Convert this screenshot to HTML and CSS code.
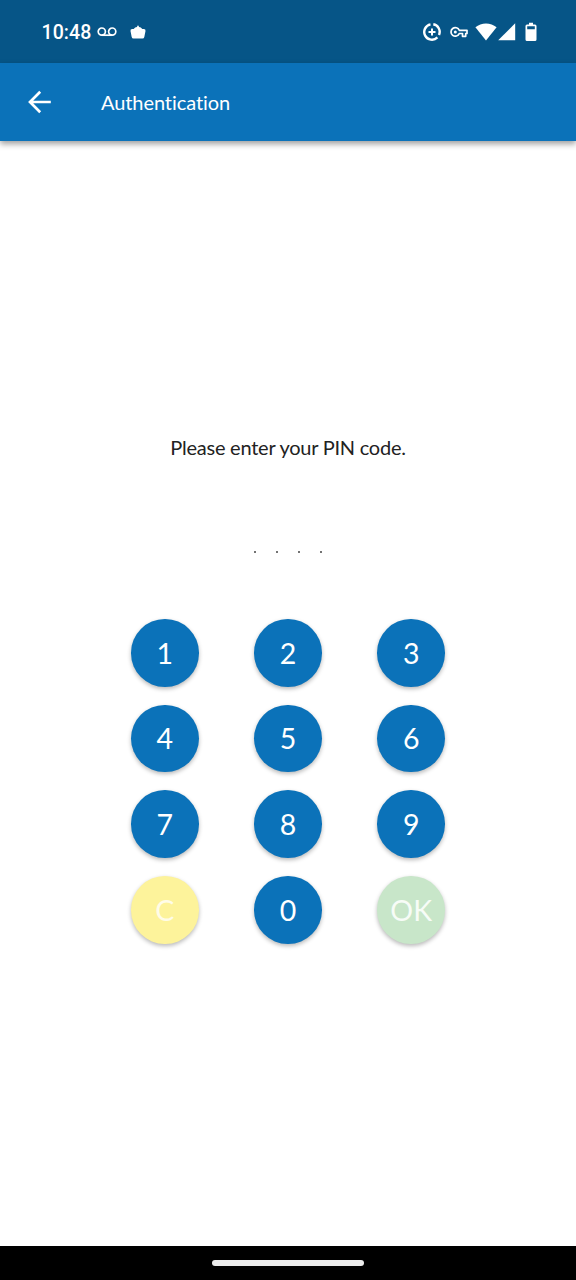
FILE: index.html
```html
<!DOCTYPE html>
<html lang="en">
<head>
<meta charset="utf-8">
<title>Authentication</title>
<link rel="stylesheet" href="styles.css">
</head>
<body>
<div class="screen">
  <div class="status">
    <span class="clock">10:48</span>
    <svg class="voicemail" width="20" height="10" viewBox="0 0 20 10"><g fill="none" stroke="currentColor" stroke-width="1.7"><circle cx="4.8" cy="4.6" r="3.6"/><circle cx="15.2" cy="4.6" r="3.6"/><path d="M4.8 8.200h10.400"/></g></svg>
    <svg class="basket" width="16" height="14" viewBox="0 0 16 14"><path fill="currentColor" d="M2.200 4h1.500Q5 2.200 7 2Q7.300.600 8 .600t1 1.400Q11 2.200 12.300 4h1.500Q15.800 4 15.500 6l-1.200 6Q14 13.500 12.500 13.500h-9Q2 13.500 1.700 12L.5 6Q.2 4 2.200 4z"/></svg>
    <svg class="saver" width="20" height="20" viewBox="0 0 20 20"><g fill="none" stroke="currentColor"><path stroke-width="2.400" d="M11.300 2.300A7.700 7.700 0 0 1 17 13M15.400 15.400A7.700 7.700 0 1 1 8.500 2.400"/><path stroke-width="2" d="M10 6.500v7M6.500 10h7"/></g></svg>
    <svg class="key" width="18" height="12" viewBox="0 0 18 12"><path fill="none" stroke="currentColor" stroke-width="1.700" stroke-linejoin="round" d="M9.300 4.300h7.700v3.200h-1.300v2.800h-3.200V7.500H9.300A4.300 4.300 0 1 1 9.300 4.300z"/><circle cx="5.300" cy="5.900" r="1.500" fill="currentColor"/></svg>
    <svg class="wifi" width="22" height="18" viewBox="0 0 22 18"><path fill="currentColor" d="M11 17.500.4 4.300Q5 .5 11 .5T21.600 4.300z"/></svg>
    <svg class="signal" width="18" height="18" viewBox="0 0 18 18"><path fill="currentColor" d="M.2 17.300 17.200.300v17z"/></svg>
    <svg class="battery" width="12" height="20" viewBox="0 0 12 20"><path fill="currentColor" fill-rule="evenodd" d="M4 .8h4v1.700h2q1.500 0 1.500 1.500v13.500q0 1.500-1.500 1.500H2Q.5 19 .5 17.500V4Q.5 2.500 2 2.500h2zM2.200 4.300v3h7.600v-3z"/></svg>
  </div>
  <header class="appbar">
    <svg class="back" width="24" height="24" viewBox="0 0 24 24"><path fill="none" stroke="currentColor" stroke-width="2.700" d="M23.800 12H3M13.200 1.800 3 12l10.200 10.200"/></svg>
    <h1 class="title">Authentication</h1>
  </header>
  <main class="content">
    <p class="prompt">Please enter your PIN code.</p>
    <div class="pin"><i class="dot"></i><i class="dot"></i><i class="dot"></i><i class="dot"></i></div>
    <div class="keypad">
      <button class="digit">1</button><button class="digit">2</button><button class="digit">3</button>
      <button class="digit">4</button><button class="digit">5</button><button class="digit">6</button>
      <button class="digit">7</button><button class="digit">8</button><button class="digit">9</button>
      <button class="digit clear">C</button><button class="digit">0</button><button class="digit ok">OK</button>
    </div>
  </main>
  <div class="navbar"><div class="handle"></div></div>
</div>
</body>
</html>
```
FILE: styles.css
```css
* { box-sizing: border-box; }
body { margin: 0; font-family: Lato, sans-serif; background: #fff; }
svg { display: block; flex: none; }
.screen { width: 576px; height: 1280px; display: flex; flex-direction: column; overflow: hidden; }
.status { height: 63px; flex: none; display: flex; align-items: center; background: #065587; color: #fff; padding-left: 41.500px; }
.clock { width: 50px; padding-top: 2px; font: 500 19.500px/24px Roboto, sans-serif; letter-spacing: .1px; white-space: nowrap; }
.voicemail { margin-left: 5.500px; }
.basket { margin-left: 13px; }
.saver { margin-left: 275.500px; }
.key { margin-left: 8.500px; }
.wifi { margin-left: 6.500px; }
.signal { margin-left: 1px; }
.battery { margin-left: 9px; }
.appbar { height: 78px; flex: none; display: flex; align-items: center; background: #0b72b9; color: #fff; padding-left: 27px; box-shadow: 0 3px 6px rgba(0,0,0,.38); }
.title { margin: 0 0 0 50px; font-size: 20px; font-weight: 400; line-height: 24px; letter-spacing: -.08px; font-variant-ligatures: none; }
.content { flex: 1; display: flex; flex-direction: column; align-items: center; }
.prompt { margin: 294px 0 0; font-size: 20px; line-height: 24px; letter-spacing: -.24px; color: #222; }
.pin { display: flex; gap: 20.200px; margin-top: 92px; }
.dot { width: 2px; height: 2px; border-radius: 50%; background: #444; }
.keypad { display: grid; grid-template-columns: repeat(3, 67.500px); gap: 18.200px 55.700px; margin-top: 66px; }
.digit { height: 67.500px; padding: 0; border: 0; border-radius: 50%; background: #0b72b9; color: #fff; font: 400 28.500px/34px Lato, sans-serif; box-shadow: 0 2px 4px rgba(0,0,0,.28); }
.clear { background: #fdf39b; color: #fffce8; }
.ok { background: #c8e6c9; color: #f7fcf7; }
.navbar { height: 34px; flex: none; display: flex; justify-content: center; align-items: center; background: #000; }
.handle { width: 152px; height: 6px; border-radius: 3px; background: #ececec; }
```
